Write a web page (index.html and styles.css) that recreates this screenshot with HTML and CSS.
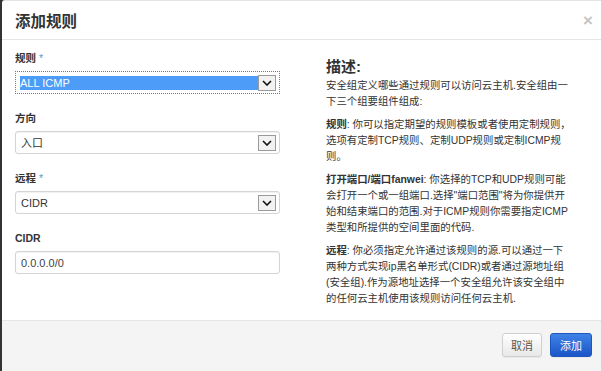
FILE: index.html
```html
<!DOCTYPE html>
<html lang="zh-CN">
<head>
    <meta charset="UTF-8">
    <title>添加规则</title>
    <link rel="stylesheet" href="styles.css">
</head>
<body>
    <div class="modal">
        <div class="modal-header">
            <h3>添加规则</h3>
            <span class="close">&times;</span>
        </div>
        <div class="modal-body">
            <div class="left">
                <div class="group">
                    <label>规则 <span class="req">*</span></label>
                    <div class="select focused">
                        <span class="value">ALL ICMP</span>
                        <span class="arrow"><svg width="10" height="6" viewBox="0 0 10 6"><path d="M1 1l4 4 4-4" fill="none" stroke="#111" stroke-width="1.6"/></svg></span>
                    </div>
                </div>
                <div class="group">
                    <label>方向</label>
                    <div class="select">
                        <span class="value">入口</span>
                        <span class="arrow"><svg width="10" height="6" viewBox="0 0 10 6"><path d="M1 1l4 4 4-4" fill="none" stroke="#111" stroke-width="1.6"/></svg></span>
                    </div>
                </div>
                <div class="group">
                    <label>远程 <span class="req">*</span></label>
                    <div class="select">
                        <span class="value">CIDR</span>
                        <span class="arrow"><svg width="10" height="6" viewBox="0 0 10 6"><path d="M1 1l4 4 4-4" fill="none" stroke="#111" stroke-width="1.6"/></svg></span>
                    </div>
                </div>
                <div class="group">
                    <label>CIDR</label>
                    <input class="input" type="text" value="0.0.0.0/0">
                </div>
            </div>
            <div class="right">
                <h4>描述:</h4>
                <p>安全组定义哪些通过规则可以访问云主机.安全组由一下三个组要组件组成:</p>
                <p><b>规则</b>: 你可以指定期望的规则模板或者使用定制规则，选项有定制TCP规则、定制UDP规则或定制ICMP规则。</p>
                <p><b>打开端口/端口fanwei</b>: 你选择的TCP和UDP规则可能会打开一个或一组端口.选择"端口范围"将为你提供开始和结束端口的范围.对于ICMP规则你需要指定ICMP类型和所提供的空间里面的代码.</p>
                <p><b>远程</b>: 你必须指定允许通过该规则的源.可以通过一下两种方式实现ip黑名单形式(CIDR)或者通过源地址组(安全组).作为源地址选择一个安全组允许该安全组中的任何云主机使用该规则访问任何云主机.</p>
            </div>
        </div>
        <div class="modal-footer">
            <button class="btn">取消</button>
            <button class="btn btn-primary">添加</button>
        </div>
    </div>
</body>
</html>
```

FILE: styles.css
```css
body {
    margin: 0;
    background-color: #333;
    font-family: 'Liberation Sans', 'Noto Sans CJK SC', sans-serif;
    color: #333;
    height: 371px;
    overflow: hidden;
}

.modal {
    margin-left: 2px;
    background: #fff;
    border-top: 1px solid #e3e3e3;
    border-top-left-radius: 3px;
    height: 370px;
    display: flex;
    flex-direction: column;
}

.modal-header {
    height: 38px;
    border-bottom: 1px solid #e5e5e5;
    display: flex;
    align-items: center;
    justify-content: space-between;
    padding: 0 8px 0 13px;
}

.modal-header h3 {
    margin: 0;
    font-size: 15.5px;
    font-weight: bold;
    color: #333;
}

.close {
    color: #c4c4c4;
    font-size: 17px;
    font-weight: bold;
    line-height: 1;
}

.modal-body {
    height: 269px;
    padding: 11px 0 0 13px;
    display: grid;
    grid-template-columns: 265px 246px;
    column-gap: 46px;
}

.group {
    margin-bottom: 17px;
}

.group label {
    display: block;
    font-size: 10.5px;
    font-weight: bold;
    line-height: 14px;
    margin-bottom: 6px;
}

.req {
    color: #5b9bd5;
    font-weight: normal;
}

.select,
.input {
    box-sizing: border-box;
    height: 23px;
    width: 265px;
    border: 1px solid #d4d4d4;
    border-radius: 3px;
    box-shadow: inset 0 1px 1px rgba(0, 0, 0, 0.06);
    background: #fff;
    display: flex;
    align-items: center;
    font-size: 11px;
}

.select {
    padding: 0 3px 0 5px;
}

.select .value {
    flex: 1;
    line-height: 14px;
}

.select.focused {
    border: 1px dotted #777;
    border-radius: 0;
    box-shadow: none;
}

.select.focused .value {
    background: #4d9cf8;
    color: #fff;
    margin-left: -1px;
}

.arrow {
    width: 16px;
    height: 14px;
    border: 1px solid #9a9a9a;
    background: #f2f2f2;
    display: flex;
    align-items: center;
    justify-content: center;
}

.input {
    padding: 0 5px;
    font-family: 'Liberation Sans', sans-serif;
    color: #444;
    outline: none;
}

.right h4 {
    margin: 7px 0 2px;
    font-size: 15px;
    line-height: 18px;
    font-weight: bold;
}

.right p {
    margin: 0 0 7px;
    font-size: 10.4px;
    line-height: 16px;
    color: #333;
}

.right p b {
    font-weight: bold;
}

.modal-footer {
    flex: 1;
    background: #f4f4f4;
    border-top: 1px solid #e5e5e5;
    display: flex;
    justify-content: flex-end;
    align-items: flex-start;
    gap: 8px;
    padding: 12px 9px 0 0;
}

.btn {
    height: 24px;
    padding: 0 8px;
    font-family: 'Noto Sans CJK SC', sans-serif;
    font-size: 11px;
    color: #555;
    border: 1px solid #cfcfcf;
    border-radius: 3px;
    background: linear-gradient(#fff, #e8e8e8);
    box-shadow: 0 1px 1px rgba(0, 0, 0, 0.05);
}

.btn-primary {
    width: 42px;
    color: #fff;
    border-color: #1d56c0;
    background: linear-gradient(#3f83e6, #1b55c8);
}
```
